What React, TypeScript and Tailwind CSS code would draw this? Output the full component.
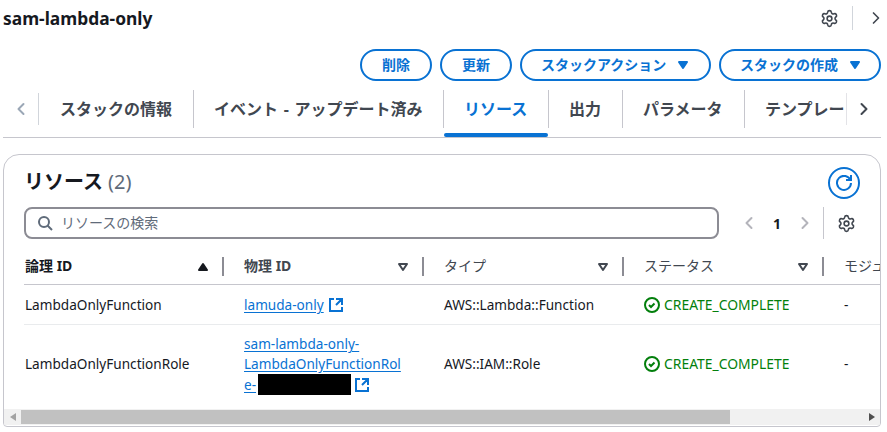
import { Settings, ChevronLeft, ChevronRight } from 'lucide-react';

const font = { fontFamily: '"Noto Sans", "Noto Sans CJK JP", sans-serif' };

const tabs = [
  { label: 'スタックの情報', w: 'w-[154px]' },
  { label: 'イベント - アップデート済み', w: 'w-[250px]' },
  { label: 'リソース', w: 'w-[105px]' },
  { label: '出力', w: 'w-[74px]' },
  { label: 'パラメータ', w: 'w-[122px]' },
  { label: 'テンプレート', w: 'w-[140px]' },
];

const Caret = ({ filled = false, className = '' }: { filled?: boolean; className?: string }) => (
  <svg viewBox="0 0 16 16" className={`w-4 h-4 shrink-0 ${className}`}>
    <path
      d="M4 5h8l-4 6z"
      fill={filled ? 'currentColor' : 'none'}
      stroke="currentColor"
      strokeWidth="2"
      strokeLinejoin="round"
    />
  </svg>
);

const External = () => (
  <svg viewBox="0 0 16 16" fill="none" stroke="currentColor" strokeWidth="2" className="w-4 h-4 shrink-0 text-[#0972d3]">
    <path d="M14 8.01v-6H8M14.02 2 8 8.01M6 2.01H2v12h12v-3.99" />
  </svg>
);

const Status = () => (
  <div className="flex items-center gap-1 text-[13.9px] text-[#037f0c]">
    <svg viewBox="0 0 16 16" fill="none" stroke="currentColor" strokeWidth="2" className="w-4 h-4">
      <circle cx="8" cy="8" r="7" />
      <path d="m5 8 2 2 3.5-3.5" />
    </svg>
    CREATE_COMPLETE
  </div>
);

const Btn = ({ label, caret = false, w }: { label: string; caret?: boolean; w: string }) => (
  <button
    className={`h-[32px] ${w} flex items-center rounded-full border-2 border-[#0972d3] text-[14px] font-bold text-[#0972d3] ${caret ? 'justify-start gap-[9px] pl-[19px]' : 'justify-center'}`}
  >
    <span className="pb-[2px]">{label}</span>
    {caret && <Caret filled />}
  </button>
);

const Head = ({ label, w, className = '', caret = 'text-[#414750]', filled = false }: { label: string; w: string; className?: string; caret?: string; filled?: boolean }) => (
  <div className={`${w} flex shrink-0 items-center pr-[20px]`}>
    <span className={`flex-1 whitespace-nowrap pb-[2px] ${className}`}>{label}</span>
    <Caret filled={filled} className={caret} />
    <span className="ml-[11px] h-[19px] w-[2px] bg-[#8c8c94]" />
  </div>
);

export default function App() {
  return (
    <div className="h-[432px] w-[887px] overflow-hidden bg-white pl-[3px] pr-[6px] text-[#16191f]" style={font}>
      {/* Page title */}
      <div className="flex h-[36px] items-center">
        <h1 className="flex-1 text-[17.4px] font-bold leading-[36px]">sam-lambda-only</h1>
        <Settings size={19} strokeWidth={2} className="text-[#414750]" />
        <span className="ml-[13px] h-[24px] w-px bg-[#d1d5db]" />
        <ChevronRight size={20} strokeWidth={2} className="-mr-[5px] ml-[13px] text-[#414750]" />
      </div>

      {/* Actions */}
      <div className="mt-[13px] flex justify-end gap-2">
        <Btn label="削除" w="w-[72px]" />
        <Btn label="更新" w="w-[72px]" />
        <Btn label="スタックアクション" caret w="w-[191px]" />
        <Btn label="スタックの作成" caret w="w-[162px]" />
      </div>

      {/* Tabs */}
      <div className="mt-[9px] flex h-[48px] border-b border-[#c6c6cd]">
        <div className="mt-[3px] flex h-[32px] w-[36px] shrink-0 items-center justify-center border-r border-[#d1d5db]">
          <ChevronLeft size={20} strokeWidth={2.4} className="text-[#9ba7b6]" />
        </div>
        <div className="flex flex-1 overflow-hidden">
          {tabs.map((t, i) => (
            <div key={t.label} className={`flex shrink-0 flex-col ${t.w}`}>
              <div
                className={`flex h-[38px] items-center whitespace-nowrap pl-5 text-[16px] font-bold [word-spacing:1.5px] ${i === 0 ? 'border-l border-transparent' : 'border-l border-[#c6c6cd]'} ${i === 2 ? 'text-[#0972d3]' : 'text-[#414750]'}`}
              >
                {t.label}
              </div>
              {i === 2 && <div className="ml-px mt-auto h-1 rounded-full bg-[#0972d3]" />}
            </div>
          ))}
        </div>
        <div className="mt-[3px] flex h-[32px] w-[35px] shrink-0 items-center justify-center border-l border-[#e3e3e7]">
          <ChevronRight size={20} strokeWidth={2.4} className="text-[#414750]" />
        </div>
      </div>

      {/* Resources card */}
      <div className="mt-[16px] h-[273px] overflow-hidden rounded-b-[4px] rounded-t-[16px] border border-[#c6c6cd]">
        <div className="flex h-[52px] items-center pl-[20px] pr-[20px] pt-[3px]">
          <h2 className="-mt-[2px] flex-1 text-[20px] font-bold">
            リソース<span className="ml-[5px] font-normal text-[#5f6b7a]">(2)</span>
          </h2>
          <div className="flex h-[32px] w-[32px] items-center justify-center rounded-full border-2 border-[#0972d3] text-[#0972d3]">
            <svg viewBox="0 0 16 16" fill="none" stroke="currentColor" strokeWidth="2" className="h-4 w-4">
              <path d="M10 5h5V0" />
              <path d="M15 8a7 7 0 1 1-.5-2.7" />
            </svg>
          </div>
        </div>

        <div className="flex h-[32px] items-center pl-[20px]">
          <div className="flex h-[32px] w-[695px] items-center gap-[8px] rounded-[8px] border-2 border-[#8c8c94] pl-[11px]">
            <svg viewBox="0 0 16 16" fill="none" stroke="#5f6b7a" strokeWidth="2" className="h-4 w-4">
              <circle cx="7" cy="7" r="5" />
              <path d="m15 15-4.5-4.5" />
            </svg>
            <span className="pb-[2px] text-[14px] text-[#5f6b7a]">リソースの検索</span>
          </div>
          <div className="ml-[20px] flex w-[76px] items-center justify-between">
            <ChevronLeft size={20} strokeWidth={2.4} className="text-[#b4b4bb]" />
            <span className="text-[14px] font-bold">1</span>
            <ChevronRight size={20} strokeWidth={2.4} className="text-[#b4b4bb]" />
          </div>
          <span className="ml-[8px] h-[32px] w-px bg-[#c6c6cd]" />
          <Settings size={19} strokeWidth={2} className="ml-[13px] text-[#414750]" />
        </div>

        {/* Table */}
        <div className="ml-[20px] mt-[11px] overflow-hidden text-[13.6px]">
          <div className="flex h-[35px] w-[1100px] items-center border-b border-[#c6c6cd] pb-px text-[14px]">
            <Head label="論理 ID" w="w-[220px]" className="pl-px font-bold" caret="rotate-180 text-[#16191f]" filled />
            <Head label="物理 ID" w="w-[200px]" className="font-bold text-[#414750]" />
            <Head label="タイプ" w="w-[200px]" className="text-[#414750]" />
            <Head label="ステータス" w="w-[200px]" className="text-[#414750]" />
            <span className="pb-[2px] text-[#414750]">モジュール</span>
          </div>
          <div className="flex h-[40px] w-[1100px] items-center border-b border-[#e9ebed] pt-px">
            <div className="w-[220px] pl-px">LambdaOnlyFunction</div>
            <div className="flex w-[200px] items-center gap-[4px]">
              <a className="text-[#0972d3] underline underline-offset-2">lamuda-only</a>
              <External />
            </div>
            <div className="w-[200px]">AWS::Lambda::Function</div>
            <div className="w-[200px]"><Status /></div>
            <div>-</div>
          </div>
          <div className="flex h-[79px] w-[1100px] items-center">
            <div className="w-[220px] pl-px">LambdaOnlyFunctionRole</div>
            <div className="w-[200px] leading-[20px] text-[#0972d3]">
              <div className="underline underline-offset-2">sam-lambda-only-</div>
              <div className="underline underline-offset-2">LambdaOnlyFunctionRol</div>
              <div className="flex items-center gap-[3px]">
                <span className="underline underline-offset-2">e-</span>
                <span className="-ml-px h-[21px] w-[93px] bg-black" />
                <External />
              </div>
            </div>
            <div className="w-[200px]">AWS::IAM::Role</div>
            <div className="w-[200px]"><Status /></div>
            <div>-</div>
          </div>
        </div>

        {/* Scrollbar */}
        <div className="mt-[5px] flex h-[16px] items-center bg-[#f1f1f1]">
          <svg viewBox="0 0 6 8" className="ml-[6px] h-2 w-[6px] fill-[#a3a3a3]"><path d="M6 0v8L0 4z" /></svg>
          <div className="ml-[5px] h-[14px] w-[709px] bg-[#c1c1c1]" />
          <svg viewBox="0 0 6 8" className="ml-[139px] h-2 w-[6px] fill-[#505050]"><path d="M0 0v8l6-4z" /></svg>
        </div>
      </div>
    </div>
  );
}
